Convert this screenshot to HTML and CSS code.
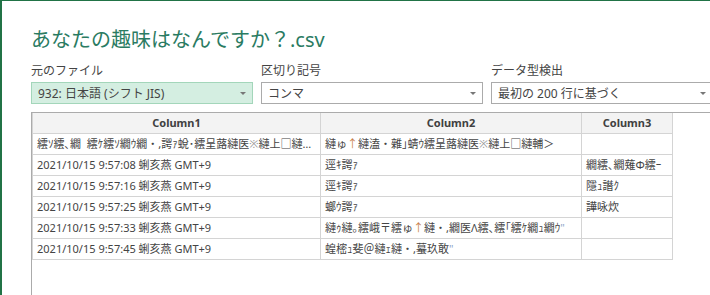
FILE: index.html
```html
<!DOCTYPE html>
<html lang="ja">
<head>
    <meta charset="UTF-8">
    <meta name="viewport" content="width=device-width, initial-scale=1.0">
    <title>あなたの趣味はなんですか？.csv</title>
    <link rel="stylesheet" href="styles.css">
</head>
<body>
    <div class="dialog">
        <h1 class="file-name">あなたの趣味はなんですか？<span class="ext">.csv</span></h1>

        <div class="options">
            <div class="option">
                <div class="option-label">元のファイル</div>
                <div class="select selected"><span>932: 日本語 (シフト JIS)</span><span class="caret"></span></div>
            </div>
            <div class="option">
                <div class="option-label">区切り記号</div>
                <div class="select"><span>コンマ</span><span class="caret"></span></div>
            </div>
            <div class="option">
                <div class="option-label">データ型検出</div>
                <div class="select"><span>最初の 200 行に基づく</span><span class="caret"></span></div>
            </div>
        </div>

        <div class="preview">
            <table class="grid">
                <colgroup>
                    <col class="col-1">
                    <col class="col-2">
                    <col class="col-3">
                </colgroup>
                <thead>
                    <tr><th>Column1</th><th>Column2</th><th>Column3</th></tr>
                </thead>
                <tbody>
                    <tr>
                        <td>繧ｿ繧､繝&nbsp;&nbsp;繧ｹ繧ｿ繝ｳ繝・,諤ｧ蛻･繧呈蕗縺医<span class="dim">※</span>縺上□縺輔＞</td>
                        <td>縺ゅ<span class="fringe">↑</span>縺溘・雜｣蜻ｳ繧呈蕗縺医<span class="dim">※</span>縺上□縺輔＞</td>
                        <td></td>
                    </tr>
                    <tr>
                        <td>2021/10/15 9:57:08 蜊亥燕 GMT+9</td>
                        <td>逕ｷ諤ｧ</td>
                        <td>繝繧､繝薙Φ繧ｰ</td>
                    </tr>
                    <tr>
                        <td>2021/10/15 9:57:16 蜊亥燕 GMT+9</td>
                        <td>逕ｷ諤ｧ</td>
                        <td>隱ｭ譖ｸ</td>
                    </tr>
                    <tr>
                        <td>2021/10/15 9:57:25 蜊亥燕 GMT+9</td>
                        <td>螂ｳ諤ｧ</td>
                        <td>譁咏炊</td>
                    </tr>
                    <tr>
                        <td>2021/10/15 9:57:33 蜊亥燕 GMT+9</td>
                        <td>縺ｩ縺｡繧峨〒繧ゅ<span class="fringe">↑</span>縺・,繝医Λ繧､繧｢繧ｹ繝ｭ繝ｳ<span class="quote">"</span></td>
                        <td></td>
                    </tr>
                    <tr>
                        <td>2021/10/15 9:57:45 蜊亥燕 GMT+9</td>
                        <td>蝗樒ｭ斐＠縺ｪ縺・,蟇玖敢<span class="quote">"</span></td>
                        <td></td>
                    </tr>
                </tbody>
            </table>
        </div>
    </div>
</body>
</html>
```

FILE: styles.css
```css
html, body {
    margin: 0;
    height: 100%;
}

body {
    font-family: "Noto Sans", "Noto Sans CJK JP", sans-serif;
    color: #444;
    background-color: #fff;
    overflow: hidden;
}

.dialog {
    height: 100%;
    box-sizing: border-box;
    border-top: 1px solid #217346;
    border-left: 2px solid #217346;
    padding-left: 29px;
    display: flex;
    flex-direction: column;
}

.file-name {
    margin: 0;
    padding-top: 24px;
    font-family: "Noto Sans CJK JP", sans-serif;
    font-size: 20px;
    line-height: 28px;
    font-weight: normal;
    color: #2a7b62;
    white-space: nowrap;
}

.file-name .ext {
    font-family: "Noto Sans", sans-serif;
}

.options {
    display: flex;
    gap: 8px;
    margin-top: 9px;
}

.option {
    flex: none;
    width: 222px;
}

.option-label {
    font-size: 12px;
    line-height: 16px;
    margin-bottom: 3px;
    white-space: nowrap;
}

.select {
    height: 22px;
    box-sizing: border-box;
    padding: 0 6px;
    border: 1px solid #ababab;
    display: flex;
    align-items: center;
    justify-content: space-between;
    font-size: 12px;
    white-space: nowrap;
}

.select.selected {
    background-color: #d4eee1;
    border-color: #a3d6ba;
}

.caret {
    width: 0;
    height: 0;
    border-left: 3px solid transparent;
    border-right: 3px solid transparent;
    border-top: 3px solid #777;
}

.preview {
    flex: 1;
    margin-top: 8px;
    border-top: 1px solid #ababab;
    border-left: 1px solid #ababab;
}

.grid {
    border-collapse: collapse;
    table-layout: fixed;
    width: 640px;
    font-size: 11px;
}

.col-1 { width: 288px; }
.col-2 { width: 261px; }
.col-3 { width: 91px; }

.grid th, .grid td {
    height: 20px;
    padding: 0 4px;
    border: 1px solid #d4d4d4;
    white-space: nowrap;
    overflow: hidden;
    text-overflow: ellipsis;
    line-height: 14px;
}

.grid thead th {
    border-top: none;
    background-color: #f3f3f3;
    font-weight: bold;
    color: #404040;
    text-align: center;
}

.grid td {
    text-align: left;
}

.fringe {
    color: #c8824a;
}

.dim {
    color: #999;
}

.quote {
    color: #8fa6c9;
}
```
